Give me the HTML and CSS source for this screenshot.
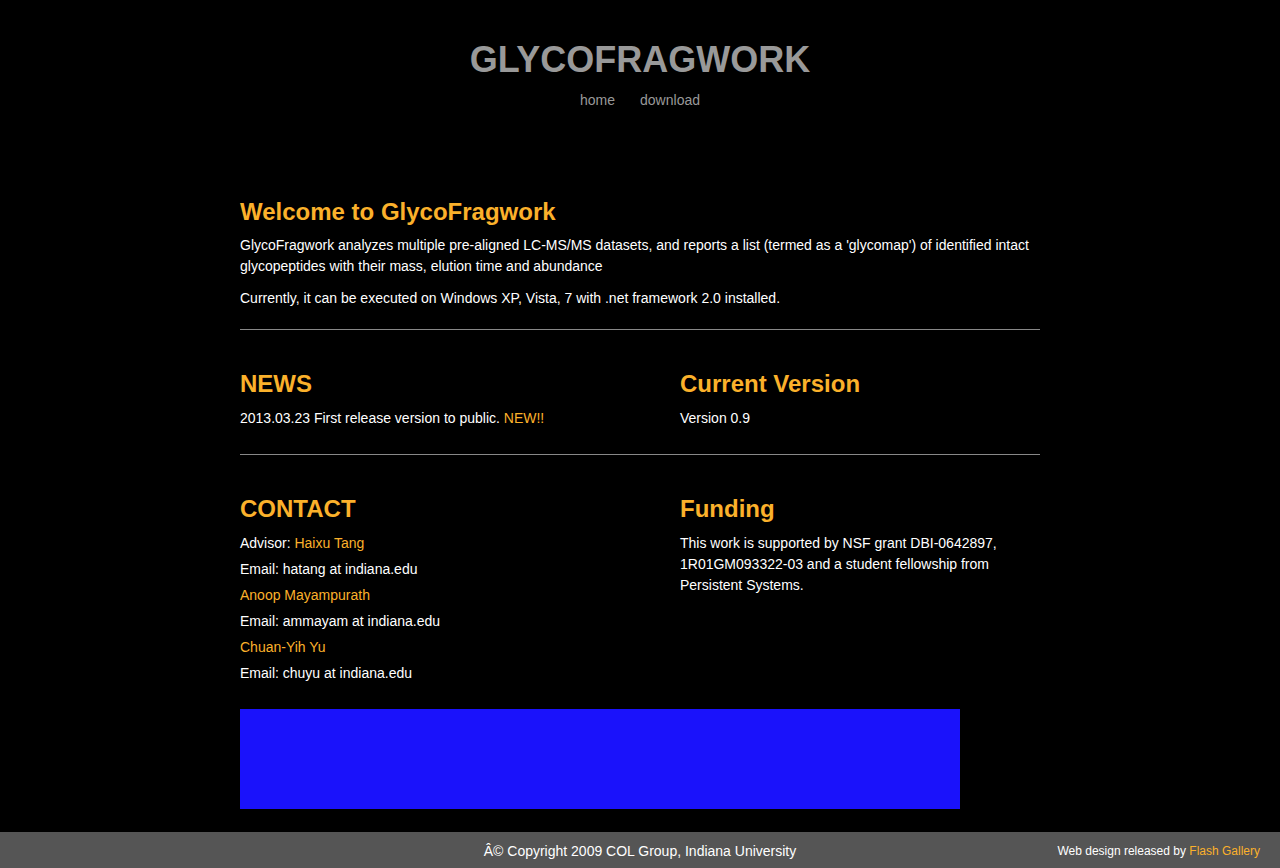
FILE: index.html
```html
<!DOCTYPE html>
<html>
<head>
<meta charset="utf-8">
<title>GlycoFragwork</title>
<link rel="stylesheet" href="styles.css">
</head>
<body>
<header class="site-header">
  <h1 class="site-title">GLYCOFRAGWORK</h1>
  <nav class="site-nav">
    <a href="#">home</a>
    <a href="#">download</a>
  </nav>
</header>
<main class="content">
  <section class="block">
    <h2>Welcome to GlycoFragwork</h2>
    <p>GlycoFragwork analyzes multiple pre-aligned LC-MS/MS datasets, and reports a list (termed as a 'glycomap') of identified intact glycopeptides with their mass, elution time and abundance</p>
    <p>Currently, it can be executed on Windows XP, Vista, 7 with .net framework 2.0 installed.</p>
  </section>
  <hr class="rule">
  <section class="cols">
    <div class="col">
      <h2>NEWS</h2>
      <p>2013.03.23 First release version to public. <span class="hl">NEW!!</span></p>
    </div>
    <div class="col">
      <h2>Current Version</h2>
      <p>Version 0.9</p>
    </div>
  </section>
  <hr class="rule">
  <section class="cols">
    <div class="col contact">
      <h2>CONTACT</h2>
      <p>Advisor: <a href="#">Haixu Tang</a></p>
      <p>Email: hatang at indiana.edu</p>
      <p><a href="#">Anoop Mayampurath</a></p>
      <p>Email: ammayam at indiana.edu</p>
      <p><a href="#">Chuan-Yih Yu</a></p>
      <p>Email: chuyu at indiana.edu</p>
    </div>
    <div class="col funding">
      <h2>Funding</h2>
      <p>This work is supported by NSF grant DBI-0642897, 1R01GM093322-03 and a student fellowship from Persistent Systems.</p>
    </div>
  </section>
  <div class="banner"></div>
</main>
<footer class="site-footer">
  <span></span>
  <span class="copy">Â© Copyright 2009 COL Group, Indiana University</span>
  <span class="credit">Web design released by <a href="#">Flash Gallery</a></span>
</footer>
</body>
</html>
```

FILE: styles.css
```css
html, body {
  margin: 0;
  padding: 0;
  background: #000;
  color: #fff;
  font-family: "Liberation Sans", Arial, Helvetica, sans-serif;
}

a {
  color: #fbb12b;
  text-decoration: none;
}

.site-header {
  padding-top: 38px;
  text-align: center;
}

.site-title {
  margin: 0;
  font-size: 36px;
  line-height: 44px;
  font-weight: bold;
  color: #999;
}

.site-nav {
  margin-top: 8px;
  display: flex;
  justify-content: center;
  gap: 25px;
  font-size: 14px;
  line-height: 20px;
}

.site-nav a {
  color: #999;
}

.content {
  width: 800px;
  margin: 87px auto 0;
}

h2 {
  margin: 0;
  font-size: 24px;
  line-height: 30px;
  font-weight: bold;
  color: #fbb12b;
}

p {
  margin: 0;
  font-size: 14px;
  line-height: 21px;
}

.block h2 {
  margin-bottom: 8px;
}

.block p + p {
  margin-top: 11px;
}

.rule {
  border: 0;
  border-top: 1px solid #888;
  margin: 20px 0 39px;
  height: 0;
}

.cols {
  display: grid;
  grid-template-columns: 440px 360px;
}

.cols h2 {
  margin-bottom: 9px;
}

.cols + .rule {
  margin-top: 25px;
}

.contact h2,
.funding h2 {
  margin-bottom: 9px;
}

.contact p {
  margin-bottom: 5px;
}

.hl {
  color: #fbb12b;
}

.banner {
  width: 720px;
  height: 100px;
  margin-top: 20px;
  background: #1a12fb;
}

.site-footer {
  margin-top: 23px;
  height: 36px;
  padding-top: 1px;
  box-sizing: border-box;
  background: #555;
  display: grid;
  grid-template-columns: 1fr auto 1fr;
  align-items: center;
}

.copy {
  font-size: 14px;
  color: #fff;
}

.credit {
  justify-self: end;
  padding-right: 20px;
  font-size: 12px;
  color: #fff;
}
```
